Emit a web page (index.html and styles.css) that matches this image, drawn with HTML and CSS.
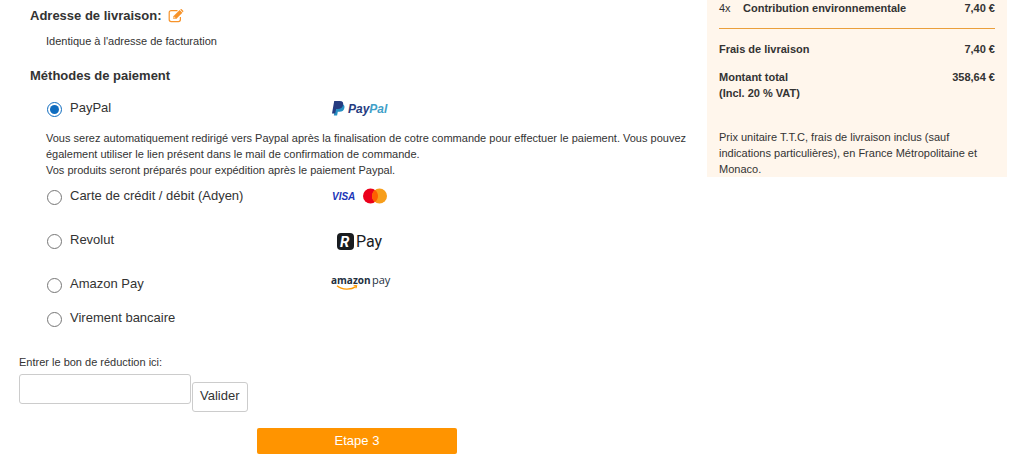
FILE: index.html
```html
<!DOCTYPE html>
<html lang="fr">
<head>
    <meta charset="UTF-8">
    <meta name="viewport" content="width=device-width, initial-scale=1.0">
    <title>Commande - Paiement</title>
    <link rel="stylesheet" href="styles.css">
</head>
<body>

    <div class="checkout">
        <!-- LIVRAISON ET PAIEMENT -->
        <main class="checkout-main">
            <form action="#" method="post">
                <section class="block">
                    <h2>
                        Adresse de livraison:
                        <a href="#" class="edit-link" aria-label="Modifier">
                            <svg width="16" height="14" viewBox="0 0 16 14" fill="none">
                                <path d="M9.5 1.6H3.2A2 2 0 0 0 1.2 3.6v7a2 2 0 0 0 2 2h7.2a2 2 0 0 0 2-2V8" stroke="currentColor" stroke-width="1.2"/>
                                <path d="M5.4 7.2 11.6 1l2.8 2.8L8.2 10H5.4z" fill="currentColor"/>
                                <path d="M12.2.6l.5-.4a.7.7 0 0 1 1 0l1.5 1.5a.7.7 0 0 1 0 1l-.5.5z" fill="currentColor"/>
                                <path d="M6.3 7.8v1.4h1.4" stroke="#fff" stroke-width=".6"/>
                            </svg>
                        </a>
                    </h2>
                    <p class="address">Identique à l'adresse de facturation</p>
                </section>

                <section class="block">
                    <h2>Méthodes de paiement</h2>

                    <div class="method">
                        <input type="radio" id="paypal" name="paiement" checked>
                        <label for="paypal">PayPal</label>
                        <svg class="method-logo" width="66" height="26" viewBox="0 0 66 26">
                            <path d="M6 9h5.4c2.6 0 3.5 1.8 3 4-.6 2.8-2.4 3.8-5 3.8H7.8L7.1 20.5H3.8z" fill="#2790c3"/>
                            <path d="M4.2 6h5.6c2.8 0 3.8 1.6 3.3 4-.6 2.8-2.5 4-5.2 4H6.1L5.2 18.6H2z" fill="#253b80"/>
                            <text x="18" y="18" class="logo-paypal"><tspan fill="#253b80">Pay</tspan><tspan fill="#3fa0c8">Pal</tspan></text>
                        </svg>
                    </div>
                    <p class="method-info">
                        Vous serez automatiquement redirigé vers Paypal après la finalisation de cotre commande pour effectuer le paiement. Vous pouvez également utiliser le lien présent dans le mail de confirmation de commande.<br>
                        Vos produits seront préparés pour expédition après le paiement Paypal.
                    </p>

                    <div class="method spaced">
                        <input type="radio" id="carte" name="paiement">
                        <label for="carte">Carte de crédit / débit (Adyen)</label>
                        <svg class="method-logo" width="66" height="26" viewBox="0 0 66 26">
                            <text x="2" y="17" class="logo-visa">VISA</text>
                            <circle cx="40.5" cy="13" r="7.5" fill="#eb001b"/>
                            <circle cx="49.5" cy="13" r="7.5" fill="#f79e1b"/>
                            <path d="M45 7a7.5 7.5 0 0 1 0 12 7.5 7.5 0 0 1 0-12z" fill="#ff5f00"/>
                        </svg>
                    </div>

                    <div class="method spaced">
                        <input type="radio" id="revolut" name="paiement">
                        <label for="revolut">Revolut</label>
                        <svg class="method-logo" width="66" height="26" viewBox="0 0 66 26">
                            <rect x="7" y="6" width="17" height="17" rx="4" fill="#191c1f"/>
                            <text x="10" y="20" class="logo-revolut-mark">R</text>
                            <text x="26" y="20" class="logo-revolut">Pay</text>
                        </svg>
                    </div>

                    <div class="method">
                        <input type="radio" id="amazon" name="paiement">
                        <label for="amazon">Amazon Pay</label>
                        <svg class="method-logo" width="66" height="26" viewBox="0 0 66 26">
                            <text x="1" y="13" class="logo-amazon"><tspan class="bold">amazon</tspan></text>
                            <text x="42" y="13" class="logo-amazon">pay</text>
                            <path d="M7 14.8c5 4.4 14 4.2 19 .8" fill="none" stroke="#f90" stroke-width="1.3"/>
                            <path d="M23.6 14.7l3.2-.3-.8 2.9" fill="none" stroke="#f90" stroke-width="1"/>
                        </svg>
                    </div>

                    <div class="method">
                        <input type="radio" id="virement" name="paiement">
                        <label for="virement">Virement bancaire</label>
                    </div>
                </section>

                <section class="coupon">
                    <label for="bon">Entrer le bon de réduction ici:</label>
                    <div class="coupon-row">
                        <input type="text" id="bon" name="bon">
                        <button type="button" class="coupon-button">Valider</button>
                    </div>
                </section>

                <button type="submit" class="next-button">Etape 3</button>
            </form>
        </main>

        <!-- RÉCAPITULATIF -->
        <aside class="summary">
            <div class="summary-row item">
                <span class="qty">4x</span>
                <strong class="name">Contribution environnementale</strong>
                <strong>7,40 €</strong>
            </div>
            <div class="summary-row">
                <strong>Frais de livraison</strong>
                <strong>7,40 €</strong>
            </div>
            <div class="summary-row">
                <strong>Montant total<br>(Incl. 20 % VAT)</strong>
                <strong>358,64 €</strong>
            </div>
            <p class="summary-note">Prix unitaire T.T.C, frais de livraison inclus (sauf indications particulières), en France Métropolitaine et Monaco.</p>
        </aside>
    </div>

</body>
</html>
```
FILE: styles.css
```css
* {
    box-sizing: border-box;
}

body {
    margin: 0;
    background-color: #fff;
    color: #333;
    font-family: "Liberation Sans", Arial, sans-serif;
    font-size: 11px;
    line-height: 16px;
}

h2, p {
    margin: 0;
}

.checkout {
    display: flex;
    align-items: flex-start;
    padding-right: 5px;
}

.checkout-main {
    flex: 1;
    padding: 8px 7px 6px 19px;
}

.block {
    padding-left: 11px;
}

.block h2 {
    display: flex;
    align-items: center;
    gap: 6px;
    margin-bottom: 7px;
    font-size: 13px;
    line-height: 16px;
}

.edit-link {
    display: flex;
    color: #f7932a;
}

.address {
    margin-bottom: 19px;
    padding: 2px 0 0 16px;
}

/* Moyens de paiement */
.method {
    display: flex;
    align-items: center;
    height: 34px;
    padding-left: 17px;
}

.method.spaced {
    margin-bottom: 10px;
}

.method input {
    width: 15px;
    height: 15px;
    margin: 3px 8px 0 0;
    accent-color: #0f6cbf;
}

.method label {
    width: 260px;
    font-size: 13px;
}

.method-info {
    padding: 5px 0 1px 16px;
}

.logo-paypal {
    font: italic 700 12px "Liberation Sans", Arial, sans-serif;
}

.logo-visa {
    font: italic 700 10px "Liberation Sans", Arial, sans-serif;
    fill: #1a35b8;
}

.logo-revolut {
    font: 400 16px Roboto, sans-serif;
    fill: #191c1f;
}

.logo-revolut-mark {
    font: italic 700 15px Roboto, sans-serif;
    fill: #fff;
}

.logo-amazon {
    font-family: "Open Sans", sans-serif;
    font-size: 11px;
    fill: #232f3e;
}

.logo-amazon .bold {
    font-size: 10px;
    font-weight: 700;
}

/* Bon de réduction */
.coupon {
    margin-top: 19px;
}

.coupon label {
    display: block;
    margin-bottom: 4px;
}

.coupon-row {
    display: flex;
    align-items: flex-start;
    gap: 1px;
}

.coupon-row input {
    width: 172px;
    height: 30px;
    padding: 4px 6px;
    border: 1px solid #ccc;
    border-radius: 3px;
}

.coupon-button {
    height: 30px;
    margin-top: 8px;
    padding: 0 7px 3px;
    border: 1px solid #ccc;
    border-radius: 3px;
    background-color: #fff;
    color: #333;
    font-family: inherit;
    font-size: 13px;
    cursor: pointer;
}

.next-button {
    display: block;
    width: 200px;
    height: 26px;
    margin: 16px 0 0 238px;
    padding: 0 0 2px;
    border: none;
    border-radius: 2px;
    background-color: #ff9400;
    color: #fff;
    font-family: inherit;
    font-size: 13px;
    cursor: pointer;
}

/* Récapitulatif */
.summary {
    width: 300px;
    padding: 0 12px;
    background-color: #fff6ec;
}

.summary-row {
    display: flex;
    justify-content: space-between;
    margin-bottom: 12px;
}

.summary-row.item {
    padding-bottom: 12px;
    border-bottom: 1px solid #ea9f3c;
}

.summary-row .qty {
    width: 24px;
}

.summary-row .name {
    flex: 1;
}

.summary-note {
    padding-top: 16px;
}
```
